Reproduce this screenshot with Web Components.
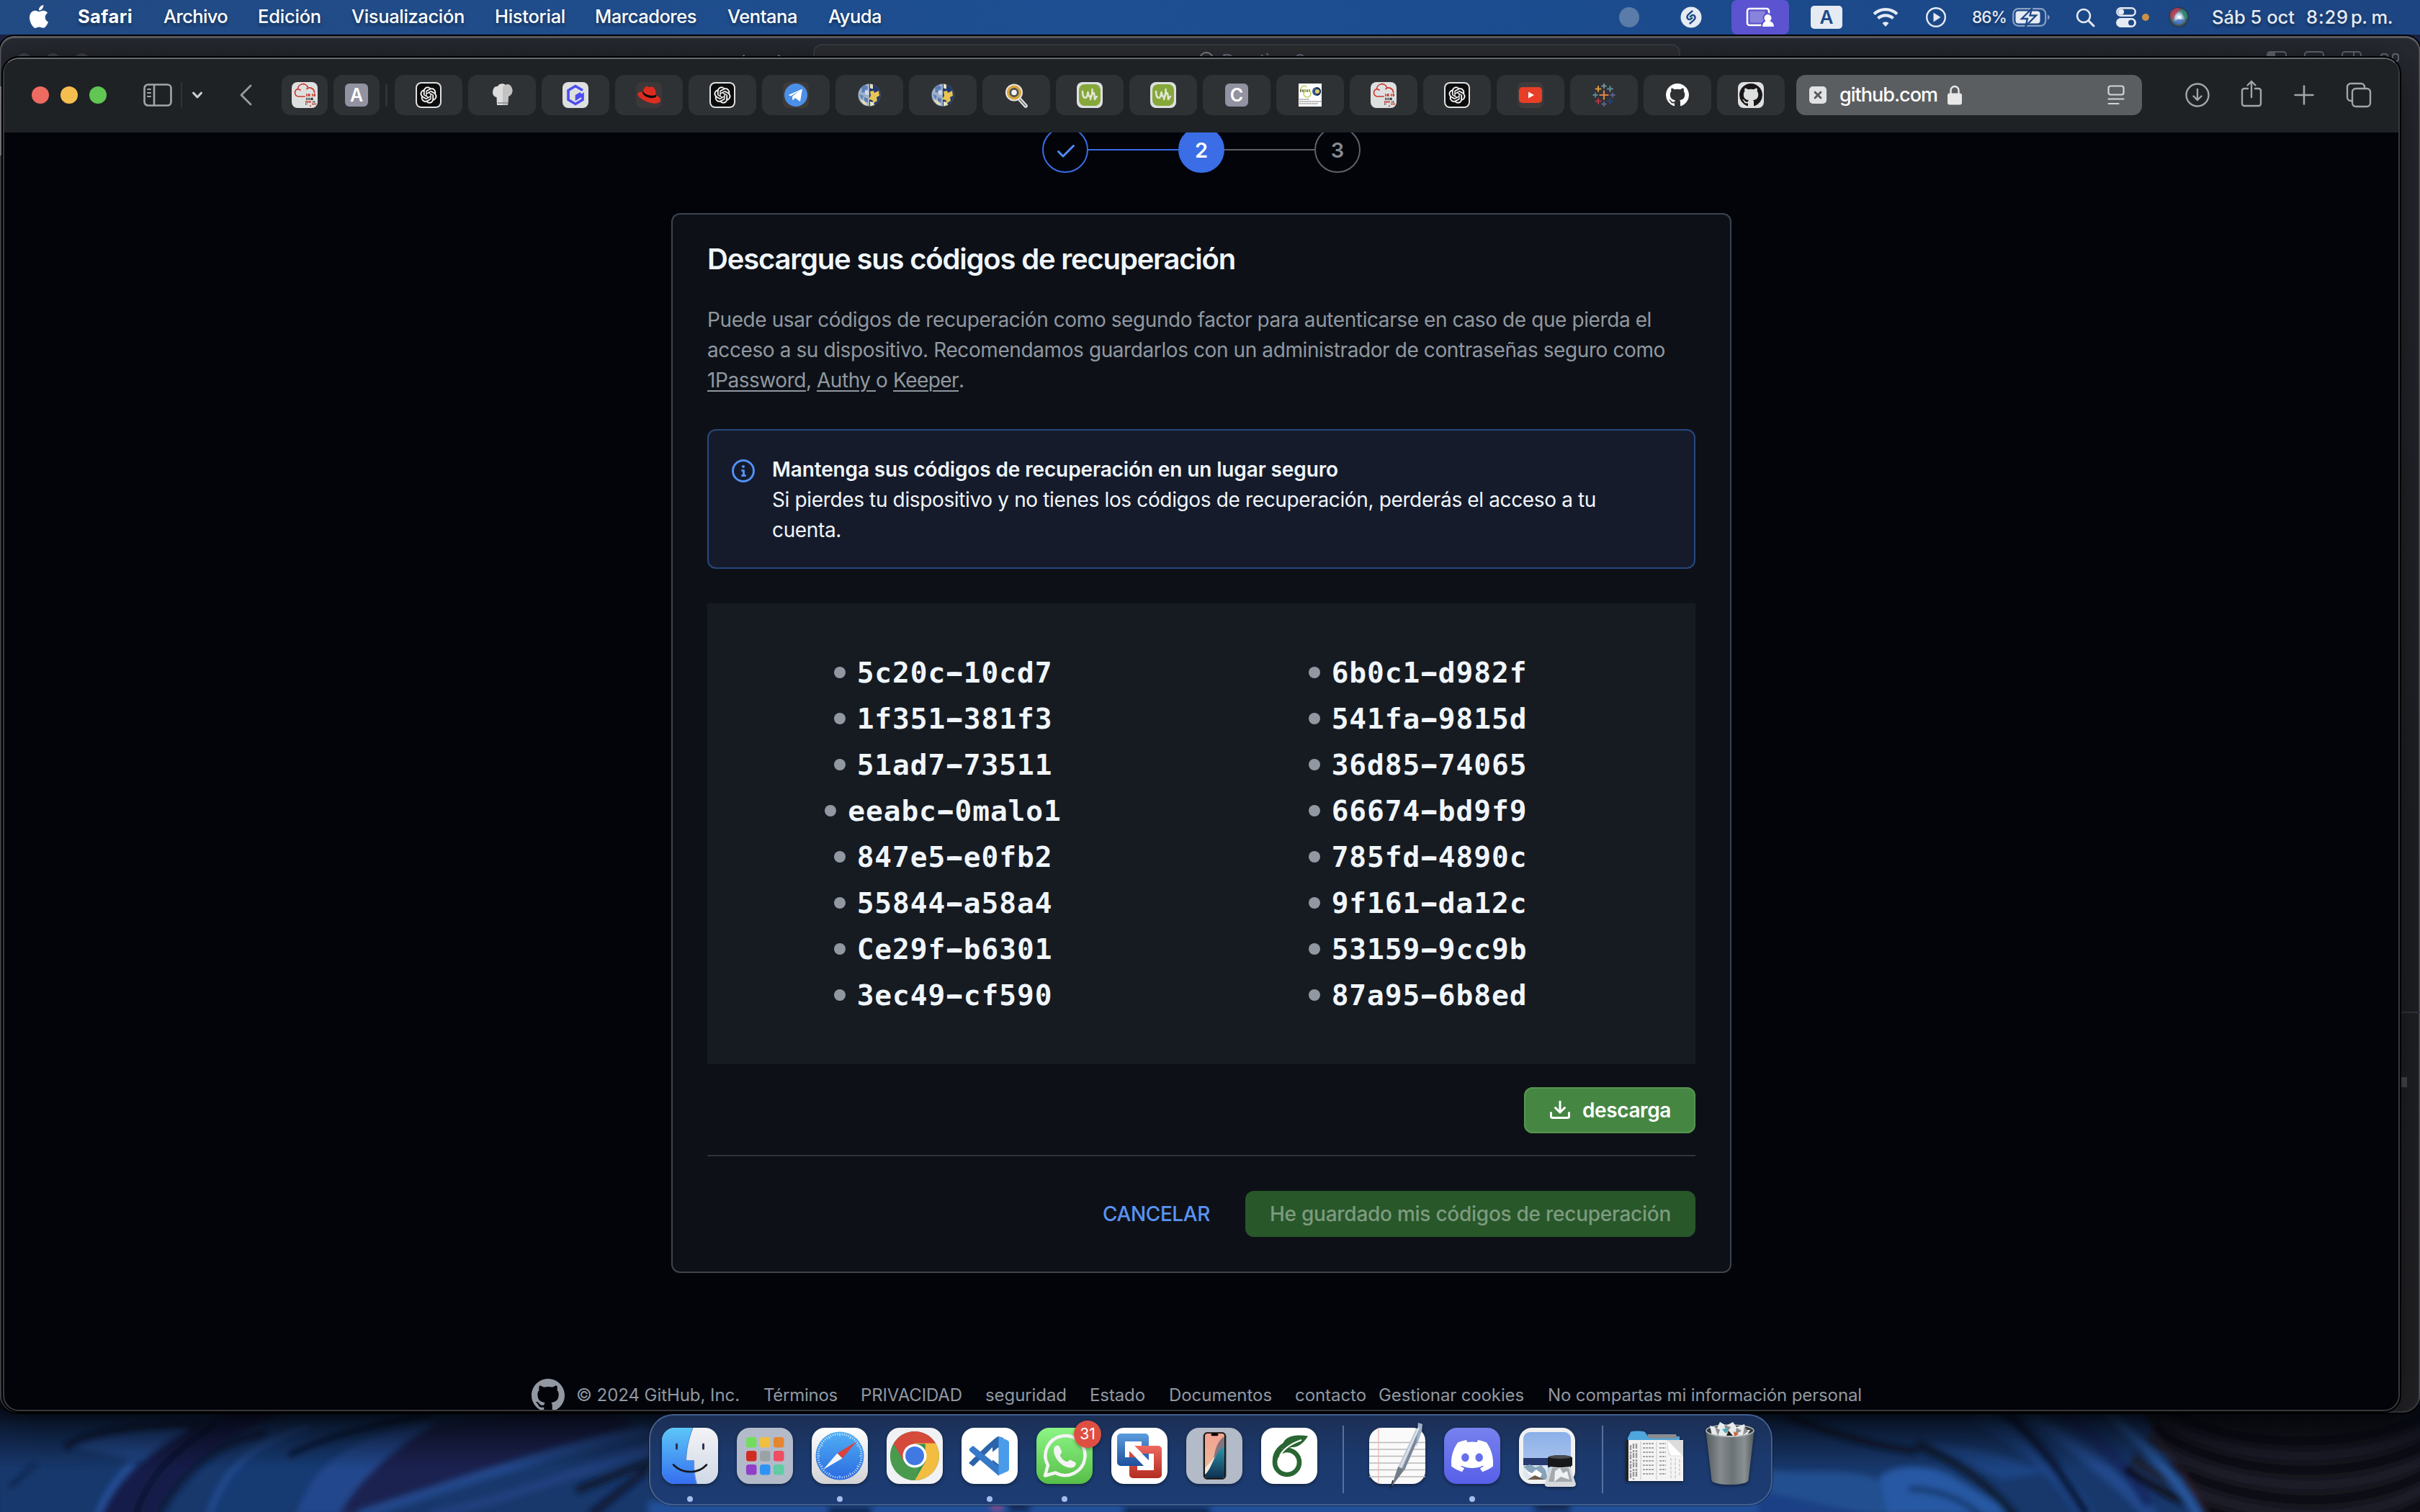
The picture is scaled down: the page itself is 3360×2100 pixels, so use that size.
<!DOCTYPE html>
<html lang="es">
<head>
<meta charset="utf-8">
<title>Códigos de recuperación</title>
<style>
html,body{margin:0;padding:0;background:#02040a}
body{width:3360px;height:2100px;overflow:hidden;font-family:Inter,"Liberation Sans",sans-serif}
</style>
</head>
<body>
<mac-desktop></mac-desktop>
<script>
const P = {
 github:'M8 0c4.42 0 8 3.58 8 8a8.013 8.013 0 0 1-5.45 7.59c-.4.08-.55-.17-.55-.38 0-.27.01-1.13.01-2.2 0-.75-.25-1.23-.54-1.48 1.78-.2 3.65-.88 3.65-3.95 0-.88-.31-1.59-.82-2.15.08-.2.36-1.02-.08-2.12 0 0-.67-.22-2.2.82-.64-.18-1.32-.27-2-.27-.68 0-1.36.09-2 .27-1.53-1.03-2.2-.82-2.2-.82-.44 1.1-.16 1.92-.08 2.12-.51.56-.82 1.28-.82 2.15 0 3.06 1.86 3.75 3.64 3.95-.23.2-.44.55-.51 1.07-.46.21-1.61.55-2.33-.66-.15-.24-.6-.83-1.23-.82-.67.01-.27.38.01.53.34.19.73.9.82 1.13.16.45.68 1.31 2.69.94 0 .67.01 1.3.01 1.49 0 .21-.15.45-.55.38A7.995 7.995 0 0 1 0 8c0-4.42 3.58-8 8-8Z',
 openai:'M22.2819 9.8211a5.9847 5.9847 0 0 0-.5157-4.9108 6.0462 6.0462 0 0 0-6.5098-2.9A6.0651 6.0651 0 0 0 4.9807 4.1818a5.9847 5.9847 0 0 0-3.9977 2.9 6.0462 6.0462 0 0 0 .7427 7.0966 5.98 5.98 0 0 0 .511 4.9107 6.051 6.051 0 0 0 6.5146 2.9001A5.9847 5.9847 0 0 0 13.2599 24a6.0557 6.0557 0 0 0 5.7718-4.2058 5.9894 5.9894 0 0 0 3.9977-2.9001 6.0557 6.0557 0 0 0-.7475-7.0729zm-9.022 12.6081a4.4755 4.4755 0 0 1-2.8764-1.0408l.1419-.0804 4.7783-2.7582a.7948.7948 0 0 0 .3927-.6813v-6.7369l2.02 1.1686a.071.071 0 0 1 .038.052v5.5826a4.504 4.504 0 0 1-4.4945 4.4944zm-9.6607-4.1254a4.4708 4.4708 0 0 1-.5346-3.0137l.142.0852 4.783 2.7582a.7712.7712 0 0 0 .7806 0l5.8428-3.3685v2.3324a.0804.0804 0 0 1-.0332.0615L9.74 19.9502a4.4992 4.4992 0 0 1-6.1408-1.6464zM2.3408 7.8956a4.485 4.485 0 0 1 2.3655-1.9728V11.6a.7664.7664 0 0 0 .3879.6765l5.8144 3.3543-2.0201 1.1685a.0757.0757 0 0 1-.071 0l-4.8303-2.7865A4.504 4.504 0 0 1 2.3408 7.872zm16.5963 3.8558L13.1038 8.364 15.1192 7.2a.0757.0757 0 0 1 .071 0l4.8303 2.7913a4.4944 4.4944 0 0 1-.6765 8.1042v-5.6772a.79.79 0 0 0-.407-.667zm2.0107-3.0231l-.142-.0852-4.7735-2.7818a.7759.7759 0 0 0-.7854 0L9.409 9.2297V6.8974a.0662.0662 0 0 1 .0284-.0615l4.8303-2.7866a4.4992 4.4992 0 0 1 6.6802 4.66zM8.3065 12.863l-2.02-1.1638a.0804.0804 0 0 1-.038-.0567V6.0742a4.4992 4.4992 0 0 1 7.3757-3.4537l-.142.0805L8.704 5.459a.7948.7948 0 0 0-.3927.6813zm1.0976-2.3654l2.602-1.4998 2.6069 1.4998v2.9994l-2.5974 1.4997-2.6067-1.4997Z',
 apple:'M12.152 6.896c-.948 0-2.415-1.078-3.96-1.04-2.04.027-3.91 1.183-4.961 3.014-2.117 3.675-.546 9.103 1.519 12.09 1.013 1.454 2.208 3.09 3.792 3.039 1.52-.065 2.09-.987 3.935-.987 1.831 0 2.35.987 3.96.948 1.637-.026 2.676-1.48 3.676-2.948 1.156-1.688 1.636-3.325 1.662-3.415-.039-.013-3.182-1.221-3.22-4.857-.026-3.04 2.48-4.494 2.597-4.559-1.429-2.09-3.623-2.324-4.39-2.376-2-.156-3.675 1.09-4.61 1.09zM15.53 3.83c.843-1.012 1.4-2.427 1.245-3.83-1.207.052-2.662.805-3.532 1.818-.78.896-1.454 2.338-1.273 3.714 1.338.104 2.715-.688 3.559-1.701',
 discord:'M20.317 4.3698a19.7913 19.7913 0 00-4.8851-1.5152.0741.0741 0 00-.0785.0371c-.211.3753-.4447.8648-.6083 1.2495-1.8447-.2762-3.68-.2762-5.4868 0-.1636-.3933-.4058-.8742-.6177-1.2495a.077.077 0 00-.0785-.037 19.7363 19.7363 0 00-4.8852 1.515.0699.0699 0 00-.0321.0277C.5334 9.0458-.319 13.5799.0992 18.0578a.0824.0824 0 00.0312.0561c2.0528 1.5076 4.0413 2.4228 5.9929 3.0294a.0777.0777 0 00.0842-.0276c.4616-.6304.8731-1.2952 1.226-1.9942a.076.076 0 00-.0416-.1057c-.6528-.2476-1.2743-.5495-1.8722-.8923a.077.077 0 01-.0076-.1277c.1258-.0943.2517-.1923.3718-.2914a.0743.0743 0 01.0776-.0105c3.9278 1.7933 8.18 1.7933 12.0614 0a.0739.0739 0 01.0785.0095c.1202.099.246.1981.3728.2924a.077.077 0 01-.0066.1276 12.2986 12.2986 0 01-1.873.8914.0766.0766 0 00-.0407.1067c.3604.698.7719 1.3628 1.225 1.9932a.076.076 0 00.0842.0286c1.961-.6067 3.9495-1.5219 6.0023-3.0294a.077.077 0 00.0313-.0552c.5004-5.177-.8382-9.6739-3.5485-13.6604a.061.061 0 00-.0312-.0286zM8.02 15.3312c-1.1825 0-2.1569-1.0857-2.1569-2.419 0-1.3332.9555-2.4189 2.157-2.4189 1.2108 0 2.1757 1.0952 2.1568 2.419 0 1.3332-.9555 2.4189-2.1569 2.4189zm7.9748 0c-1.1825 0-2.1569-1.0857-2.1569-2.419 0-1.3332.9554-2.4189 2.1569-2.4189 1.2108 0 2.1757 1.0952 2.1568 2.419 0 1.3332-.946 2.4189-2.1568 2.4189Z'
};
const S = (w,h,body,vb) => `<svg xmlns="http://www.w3.org/2000/svg" width="${w}" height="${h}" viewBox="${vb||`0 0 ${w} ${h}`}" fill="none">${body}</svg>`;
const plate = (c='#dee0e0') => `<rect width="36" height="36" rx="8" fill="${c}"/>`;
const line = (d,c='#a3a6a8',w=2.6) => `<path d="${d}" stroke="${c}" stroke-width="${w}" stroke-linecap="round" stroke-linejoin="round"/>`;
const tile = (fill,stroke='') => `<rect width="78" height="78" rx="18" fill="${fill}" ${stroke}/>`;
const grad = (id,a,b,dir='x1="0" y1="0" x2="0" y2="1"') => `<linearGradient id="${id}" ${dir}><stop offset="0" stop-color="${a}"/><stop offset="1" stop-color="${b}"/></linearGradient>`;
const ticks = () => { let s=''; for(let i=0;i<60;i++){ s+=`<path d="M39 7.5v${i%5?2.6:4.2}" transform="rotate(${i*6} 39 39)" stroke="#e8f3fd" stroke-width="1"/>`; } return s; };
const rows = (x,y,w,n,step,c) => { let s=''; for(let i=0;i<n;i++) s+=`<path d="M${x} ${y+i*step}h${w-(i*7%5)}" stroke="${c}" stroke-width="1.2" stroke-dasharray="${2+i%3} .8"/>`; return s; };
const plus = (x,y,r,c,w) => `<path d="M${x-r} ${y}h${2*r}M${x} ${y-r}v${2*r}" stroke="${c}" stroke-width="${w}"/>`;

const ICONS = {
 apple: S(26,32,`<path d="${P.apple}" fill="#fff"/>`,'2.2 0 19.6 24'),
 sidebar: S(40,32,`<rect x="1.5" y="1.5" width="37" height="29" rx="5" stroke="#a3a6a8" stroke-width="2.6"/><path d="M15 2v28" stroke="#a3a6a8" stroke-width="2.6"/>${line('M6 8h4M6 13h4M6 18h4','#a3a6a8',2)}`),
 chevdown: S(16,12,line('M2.5 3l5.5 6 5.5-6','#cfd0d1',3)),
 back: S(18,30,line('M16 2L3 15l13 13','#9a9c9e',2.8)),
 thm: S(36,36,plate()+`<path d="M18 20H9a5.300 5.300 0 0 1-1-10.200M8 10c1.500-.3 3 .2 4 1.200M8.500 9.800a7.200 7.200 0 0 1 14-2.300M21 9.500c4-3.500 10.500-.5 10.500 5" stroke="#c8372d" stroke-width="1.700" stroke-linecap="round"/><path d="M20 18h1.500m1 0h3m2.500 0h1.500m1 0h2.500" stroke="#c8372d" stroke-width="3.600"/><path d="M20 23.300h1.200m1 0h1.200m1 0h1.200m1 0h3" stroke="#333" stroke-width="3.200"/><path d="M19 27.500h8" stroke="#c8372d" stroke-width="2.400" stroke-dasharray="1.600 .6"/><path d="M29 27.500h4M19 30.500h2.500" stroke="#444" stroke-width="1.800" stroke-dasharray="1.400 .6"/><path d="M28 30.500h6M25 33.300h2" stroke="#c8372d" stroke-width="2" stroke-dasharray="1.600 .6"/>`),
 openai: S(36,36,plate()+`<rect x="2" y="2" width="32" height="32" rx="6" fill="#0c0c0c"/><path transform="translate(6.600 6.600) scale(.95)" d="${P.openai}" fill="#fff" stroke="#fff" stroke-width=".35"/>`),
 chef: S(36,36,`<path d="M11 32l-.5-11C5 20 4 14 6 10c1-4 4-4 6-4 1-4 8-5 11-2 3-2 7 0 8 3 3 5 1 11-4 13l-1 12z" fill="#dcdcdc"/><path d="M19 6v26h7l1-12c5-2 7-8 4-13-1-3-5-5-8-3z" fill="#c2c2c2"/><path d="M12 29h14" stroke="#888" stroke-width="1.500"/>`),
 hex: S(36,36,plate()+`<path d="M28 11.500L18 5.500 8 11.500v13l10 6 10-6v-7l-8.500 5.500v-4l6-3.500" stroke="#4c4cf5" stroke-width="3.600"/>`),
 redhat: S(36,36,plate('#3c3838')+`<path d="M9 14c2-5 3-8 6-8 2 0 2 1 4 1s3-1 5 0c3 2 4 8 4 11 7 4 8 9 3 11-8 3-24-4-28-10-2-4 2-6 6-5z" fill="#dc2c20"/><path d="M9 14.500c1 6 13 10 19 6l.5-3.500c-5 4-17 1-19-5z" fill="#0b0b0b"/>`),
 telegram: S(36,36,plate('#3e3b3b')+`<circle cx="18" cy="18" r="16" fill="#4a90e8"/><path d="M7.500 18L27 9.500 24 27l-7-5-3.500 3.500L13 20l9-7.500-11 7z" fill="#fff"/>`),
 ball: S(36,36,`<circle cx="18" cy="18" r="15.500" fill="#9fb0cb"/><path d="M18 2.500a15.500 15.500 0 0 1 0 31z" fill="#22386f"/><path d="M19 2.500l4 1v6l-4-1zM19 27l5 1 1 4-6 1.500z" fill="#e9e3b8"/><path d="M19 13l5-1 1 3 6-3 1 7-4 2 1 5-5 3-2-4-5-1 3-5z" fill="#e8c552"/><path d="M7 7l5-3 4 3-2 6-6 2zM4 17l6 2-2 5zM11 21l5 2v5l-5-1z" fill="#5c7fb5"/><path d="M12 11l5 1v6l-5-1z" fill="#cfd8e2"/><path d="M5 24l6 2 5 6-6-1z" fill="#e4dcae"/>`),
 mag: S(36,36,`<path d="M22 23l9 10" stroke="#eceae6" stroke-width="5.500" stroke-linecap="round"/><path d="M22 23l9 10" stroke="#777" stroke-width="1.800" stroke-linecap="round"/><circle cx="15" cy="14.500" r="12" fill="#e8e5e0"/><circle cx="15" cy="14.500" r="10" fill="#d9a53c"/><circle cx="15" cy="14.500" r="6.500" fill="#4c5158"/><circle cx="15" cy="14.500" r="3.800" fill="#f3f3f3"/>`),
 wn: S(36,36,plate()+`<rect x="3" y="3" width="30" height="30" rx="8" fill="#86a83a"/><path d="M8 13c0 6 2 9 4 9s3-4 3.500-8c.5 4 1.500 7 3.500 6s3-6 2.500-10M19 24c1-5 3-9 4.500-9s1 7 1.500 9c1-1 2-4 3-4" stroke="#e3e8d8" stroke-width="2.500" stroke-linecap="round" stroke-linejoin="round"/>`),
 pic: S(36,36,`<rect x="2" y="2" width="32" height="32" fill="#fff"/><path d="M4 12h15" stroke="#6b6f40" stroke-width="3.500" stroke-dasharray="2 1"/><circle cx="14" cy="16" r="5" stroke="#b9cf5a" stroke-width="1.500"/><path d="M5 10c1-5 6-6 8-3" stroke="#b9cf5a" stroke-width="1.500"/><circle cx="27" cy="13" r="6" fill="#35548c"/><path d="M27 7a6 6 0 0 1 0 12z" fill="#1c2d50"/><circle cx="28" cy="13" r="3" fill="#d8cd72"/>${rows(3,24,14,1,3,'#555')}${rows(3,27,31,1,3,'#555')}${rows(3,30,26,1,3,'#555')}`),
 youtube: S(36,36,plate('#3e3b3b')+`<rect x="2" y="7" width="32" height="22" rx="5" fill="#e93e27"/><path d="M15 13.500v9l8-4.500z" fill="#fff"/>`),
 tableau: S(36,36,plus(18,18,6.500,'#dd8149',2.200)+plus(18,5.500,3.500,'#7593a6',1.800)+plus(18,30.500,3.500,'#5b6591',1.800)+plus(6,18,3.500,'#5b8a96',1.800)+plus(30,18,3.500,'#5f6090',1.800)+plus(10,9.500,4.300,'#e0953d',2)+plus(26.500,9.500,4.300,'#64899b',2)+plus(10,26.500,4.300,'#b63345',2)+plus(26.500,26.500,4.300,'#27407f',2)),
 ghwhite: S(36,36,`<path transform="translate(2 2) scale(2)" d="${P.github}" fill="#fff"/>`),
 ghplate: S(36,36,plate()+`<path transform="translate(2 2) scale(2)" d="${P.github}" fill="#19171a"/>`),
 xtile: S(24,24,`<rect width="24" height="24" rx="5" fill="#e3e3e4"/>${line('M8 8l8 8M16 8l-8 8','#55585b',2.800)}`),
 lock: S(20,28,`<rect x="0" y="11.500" width="20" height="16" rx="3" fill="#e8e8e9"/><path d="M4.500 12V7.500a5.500 5.500 0 0 1 11 0V12" stroke="#e8e8e9" stroke-width="2.400"/>`),
 reader: S(24,28,`<rect x="1.500" y="1.500" width="21" height="12" rx="3" stroke="#d4d5d6" stroke-width="2.200"/>${line('M1.500 19.500h21M1.500 26h14','#d4d5d6',2.200)}`),
 download: S(34,34,`<circle cx="17" cy="17" r="15.500" stroke="#a3a6a8" stroke-width="2.400"/>${line('M17 9v15M11.500 18.500l5.500 5.500 5.500-5.500','#a3a6a8',2.400)}`),
 share: S(30,38,line('M10 12H5a3 3 0 0 0-3 3v18a3 3 0 0 0 3 3h20a3 3 0 0 0 3-3V15a3 3 0 0 0-3-3h-5M15 24V2M9.500 7.500L15 2l5.500 5.500','#a3a6a8',2.400)),
 newtab: S(28,28,line('M14 1.500v25M1.500 14h25','#a3a6a8',2.600)),
 tabs: S(36,36,`<rect x="9" y="9" width="25" height="25" rx="5" stroke="#a3a6a8" stroke-width="2.400"/>${line('M9 26H7a5 5 0 0 1-5-5V7a5 5 0 0 1 5-5h14a5 5 0 0 1 5 5v2','#a3a6a8',2.400)}`),
 shazam: S(30,30,`<circle cx="15" cy="15" r="14.500" fill="#e6ebf3"/><g stroke="#1f4a86" stroke-width="2.400" stroke-linecap="round"><path d="M16.500 6.500l-5.300 4.700c-3.800 3.500-.6 9.200 3.800 5.800l1.300-1.200"/><path d="M13.500 23.500l5.300-4.700c3.800-3.500.6-9.200-3.800-5.800l-1.300 1.200"/></g>`),
 share2: S(40,28,`<rect x="2" y="2" width="30" height="23" rx="3" stroke="#fff" stroke-width="2.600"/><rect x="5.500" y="5.500" width="21" height="16" fill="#8883dc"/><path d="M22 28c0-6 2-8 4-9a6 6 0 1 1 9 0c3 1 5 4 5 9z" fill="#fff" stroke="#5b53cf" stroke-width="2"/>`),
 wifi: S(36,28,`<path d="M18 27l-4.500-5a6.500 6.500 0 0 1 9 0z" fill="#e6ebf3"/><path d="M7.500 15.500a15.500 15.500 0 0 1 21 0M2 9.500a23.500 23.500 0 0 1 32 0" stroke="#e6ebf3" stroke-width="4.200"/>`),
 play: S(30,30,`<circle cx="15" cy="15" r="12.800" stroke="#e6ebf3" stroke-width="2.400"/><path d="M11.500 8.500v13l10-6.500z" fill="#e6ebf3"/>`),
 battery: S(52,26,`<rect x="1.200" y="1.200" width="45" height="23.600" rx="7" stroke="#8ba0c2" stroke-width="2.200"/><rect x="4.500" y="4.500" width="34" height="17" rx="4" fill="#e6ebf3"/><path d="M49 9.500c3.500 1.500 3.500 5.500 0 7z" fill="#8ba0c2"/><path d="M27 1L13 15h8l-2.500 10L33 10.500h-8.500z" fill="#e6ebf3" stroke="#1f4987" stroke-width="2.400"/>`),
 search: S(27,27,`<circle cx="11" cy="11" r="9" stroke="#e6ebf3" stroke-width="2.600"/>${line('M18 18l7 7','#e6ebf3',3)}`),
 control: S(28,28,`<rect x="1.300" y="1.300" width="25.400" height="10.400" rx="5.200" stroke="#e6ebf3" stroke-width="2.400"/><circle cx="7" cy="6.500" r="4" fill="#e6ebf3"/><rect y="15" width="28" height="13" rx="6.500" fill="#e6ebf3"/><circle cx="21" cy="21.500" r="4" fill="#1f4987"/>`),
 siri: S(28,28,`<defs><radialGradient id="s"><stop offset="0" stop-color="#fff"/><stop offset=".35" stop-color="#a9cbe0"/><stop offset=".7" stop-color="#476d80"/><stop offset="1" stop-color="#26313d"/></radialGradient></defs><circle cx="14" cy="14" r="14" fill="url(#s)"/><path d="M3 6c5-6 12-6 14-3-3 3-9 6-10 15-5-2-6-7-4-12z" fill="#c8384f" opacity=".75"/><path d="M17 2c8 2 10 8 9 14-4 0-7-5-9-14z" fill="#2f8b6c" opacity=".85"/><path d="M6 21c6 4 12 3 16-3l-8-2z" fill="#3a67c4" opacity=".7"/><circle cx="15" cy="14" r="2.600" fill="#f4fafc"/>`),
 check: S(32,32,`<path d="M13.780 4.220a.75.75 0 0 1 0 1.060l-7.250 7.250a.75.75 0 0 1-1.060 0L2.220 9.280a.751.751 0 0 1 .018-1.042.751.751 0 0 1 1.042-.018L6 10.940l6.720-6.720a.75.75 0 0 1 1.060 0Z" fill="#4f8df5"/>`,'0 0 16 16'),
 info: S(32,32,'<path d="M0 8a8 8 0 1 1 16 0A8 8 0 0 1 0 8Zm8-6.500a6.500 6.500 0 1 0 0 13 6.500 6.500 0 0 0 0-13ZM6.500 7.750A.75.75 0 0 1 7.250 7h1a.75.75 0 0 1 .75.75v2.750h.25a.75.75 0 0 1 0 1.500h-2a.75.75 0 0 1 0-1.500h.25v-2h-.25a.75.75 0 0 1-.75-.75ZM8 6a1 1 0 1 1 0-2 1 1 0 0 1 0 2Z" fill="#5390f4"/>','0 0 16 16'),
 dl: S(32,32,'<path d="M2.750 14A1.750 1.750 0 0 1 1 12.250v-2.500a.75.75 0 0 1 1.500 0v2.500c0 .138.112.25.25.25h10.500a.25.25 0 0 0 .25-.25v-2.500a.75.75 0 0 1 1.500 0v2.500A1.750 1.750 0 0 1 13.250 14Z" fill="#fff"/><path d="M7.250 7.689V2a.75.75 0 0 1 1.500 0v5.689l1.970-1.969a.749.749 0 1 1 1.060 1.060l-3.250 3.250a.749.749 0 0 1-1.060 0L4.220 6.780a.749.749 0 1 1 1.060-1.060l1.970 1.969Z" fill="#fff"/>','0 0 16 16'),
 mark: S(46,46,`<path d="${P.github}" fill="#9198a1"/>`,'0 0 16 16'),
 layout: S(184,28,`<g stroke="#666a75" stroke-width="2"><rect x="1" y="1" width="26" height="24" rx="4"/><rect x="53" y="1" width="26" height="24" rx="4"/><rect x="105" y="1" width="26" height="24" rx="4"/><path d="M121 1v24"/><rect x="159" y="4" width="9" height="10" rx="3"/><rect x="175" y="4" width="8" height="10" rx="3"/></g><path d="M2 2h10v23H2z" fill="#666a75"/>`),
 /* dock */
 finder: S(78,78,`<defs>${grad('a','#5cc6f8','#356ff0')}${grad('b','#f3f3f6','#cfd9e6')}<clipPath id="c"><rect width="78" height="78" rx="18"/></clipPath></defs><g clip-path="url(#c)"><rect width="78" height="78" fill="url(#b)"/><path d="M0 0h43c-6 16-9 30-9.500 46H44c0 12 1 22 4 32H0z" fill="url(#a)"/><path d="M43 0c-6 16-9 30-9.500 45.500H44.500c0 12 1 22 4 33" stroke="#3f74c9" stroke-width=".8"/></g><path d="M20.500 23v6M57.500 23v6" stroke="#26344e" stroke-width="3" stroke-linecap="round"/><path d="M16 51.500c13 13 34 13 46 0" stroke="#15181e" stroke-width="2.600" stroke-linecap="round"/>`),
 launchpad: S(78,78,tile('#b3bbca')+[['#74dc5d',13,13],['#f0bf40',32,13],['#e5862f',51,13],['#d02d22',13,32],['#9aa2a6',32,32],['#ee4d62',51,32],['#8f3fc9',13,51],['#2f93f3',32,51],['#61cba3',51,51]].map(a=>`<rect x="${a[1]}" y="${a[2]}" width="14.500" height="14.500" rx="3.500" fill="${a[0]}"/>`).join('')),
 safari: S(78,78,`<defs>${grad('a','#51b0f5','#2a6ae0')}${grad('b','#ffffff','#d3d3d5')}</defs>${tile('url(#b)')}<circle cx="39" cy="39" r="33.500" fill="url(#a)"/>${ticks()}<path d="M62.500 19L42.500 42.500l-7-7z" fill="#d9433b"/><path d="M16 58l19.500-22.500 7 7z" fill="#f4f6f8"/>`),
 chrome: S(78,78,tile('#f1f2f5')+`<circle cx="39" cy="39" r="34" fill="#2f9150"/><path d="M9.600 22A34 34 0 0 1 68.400 22H39L24.300 47.500z" fill="#d64a3c"/><path d="M68.400 22A34 34 0 0 1 39 73l14.700-25.500L53.700 22z" fill="#f3bd42"/><path d="M39 22h29.400" stroke="#f3bd42"/><path d="M39 73A34 34 0 0 1 9.600 22l14.700 25.500A17 17 0 0 0 46 54.500z" fill="#4a9a4e"/><circle cx="39" cy="39" r="16.500" fill="#fff"/><circle cx="39" cy="39" r="13" fill="#4079e4"/>`),
 vscode: S(78,78,tile('#fff')+`<path d="M10 49c1-1 35-35 41-37l7 2v48l-7-2-8-9V27L17 53c-1 1-2 0-3-1z" fill="#2b64a8"/><path d="M11 29l5-4 36 29v13L11 32z" fill="#3579c8"/><path d="M51.500 12L64 17.500c1.500 1 2 2 2 3V57c0 2-1 3-2 3.500L51.500 66z" fill="#4a9ceb"/><path d="M51.500 27v24L36 39z" fill="#fff"/>`),
 whatsapp: S(78,78,`<defs>${grad('a','#8cf585','#57bf48')}</defs>${tile('url(#a)')}<path d="M12 66.500l4-14.500a27.500 27.500 0 1 1 10.500 10.500z" stroke="#f4f4f4" stroke-width="4.500" stroke-linejoin="round"/><path d="M25 27c2-3 6-3.500 7-1l3 7c1 2-3 4-2 6 2 4 5 7 9 8 2 1 3-3 6-2l6 3c2 2 0 6-3 7-12 4-31-14-26-28z" fill="#f4f4f4"/>`),
 vmware: S(78,78,`<defs>${grad('a','#5b9ddd','#1e4f9d')}${grad('b','#ee6860','#b32c22')}</defs>${tile('#fff')}<path fill-rule="evenodd" d="M13 8h34a5 5 0 0 1 5 5v35a5 5 0 0 1-5 5H13a5 5 0 0 1-5-5V13a5 5 0 0 1 5-5zm6 11v22h23V19z" fill="url(#a)"/><path d="M32 25h33a5 5 0 0 1 5 5v35a5 5 0 0 1-5 5H30a5 5 0 0 1-5-5V53h11v6h23V36H43z" fill="url(#b)"/><path d="M25 32l10 9H25z" fill="#d8463e"/><path d="M24.500 31.500V25H32l20 20V36h7v23H36v-6h9z" fill="#fff"/><path d="M43 36h9v9z" fill="#2f68b4"/>`),
 iphone: S(78,78,`<defs>${grad('a','#2f98ae','#0e2f4e')}${grad('b','#f3a291','#e9c09a')}</defs>${tile('#b3bbc8')}<rect x="24" y="6.500" width="31" height="65" rx="5" fill="#0d1014" stroke="#463a30"/><rect x="26" y="8" width="27" height="62" rx="3.500" fill="url(#b)"/><path d="M53 12v18L38 46c1-14 5-28 15-34z" fill="#84737e"/><path d="M26 56l27-30v8L26 66z" fill="#f4e6df"/><path d="M53 25v42a3 3 0 0 1-3 3H29a3 3 0 0 1-3-3v-2c10-8 12-30 27-40z" fill="url(#a)"/><rect x="34.500" y="8" width="10" height="3.200" rx="1.600" fill="#000"/>`),
 oleaf: S(78,78,tile('#fff')+`<circle cx="36" cy="48" r="17" stroke="#2a6633" stroke-width="6.600"/><path d="M18.500 46c0-10 6-18 14-23" stroke="#2a6633" stroke-width="5.500"/><path d="M30 27c-1-14 15-19 35-15.500-6 10-14 16-22 15.500-5 0-9 4-12 9z" fill="#2a6633"/><path d="M26 39c5-10 16-17 30-22" stroke="#fff" stroke-width="2.200"/>`),
 textedit: S(78,78,tile('#fafafa')+`<path d="M0 20.500h78M0 30h78M0 39.500h78M0 49h78M0 58.500h78M0 68h78" stroke="#b9b9b9" stroke-width="1.400"/><path d="M13 0v78" stroke="#efb2b2" stroke-width="1.200"/><path d="M65 2l8 2-24 55-9-4z" fill="#bac4d2"/><path d="M69 3l4 1-24 55-3.500-1.500z" fill="#7a8798"/><path d="M68-7l6 2-1 10-8 22 2-24z" fill="#9fb0c5"/><path d="M69 0L34 75" stroke="#dfe6ee" stroke-width="2"/><path d="M40 54l9 4-18 24z" fill="#737b86"/><path d="M33 73l-3 10" stroke="#222" stroke-width="1.600"/>`),
 discord: S(78,78,`<defs>${grad('a','#7781ee','#5760e8')}</defs>${tile('url(#a)')}<path transform="translate(10 10) scale(2.420)" d="${P.discord}" fill="#fff"/>`),
 preview: S(78,78,`<defs>${grad('a','#8bb0e8','#b9cdf0')}</defs><rect width="78" height="78" rx="18" fill="#f1f1f2"/><rect x="6" y="6" width="66" height="66" rx="9" fill="url(#a)"/><path d="M6 42h66v13H6z" fill="#273a70"/><path d="M6 52h34v20H15a9 9 0 0 1-9-9z" fill="#dfe7ee"/><path d="M6 54l9-3 8 4 8-3 6 7 3 13H22l-5-8z" fill="#87a3bb"/><path d="M10 60l8 3 6-5 8 6-3 6-12-3z" fill="#fff"/><path d="M12 72l10-6 14 6z" fill="#705c4c"/><path d="M43 54h28l8 24c0 4-4 4-6 4H41c-3 0-6-1-5-5z" fill="#d6d9dc"/><path d="M46 56h23l5 19H41z" fill="#a3a9ae"/><path d="M50 60l7-4 4 7 6-3 3 12-12-4-9 7z" fill="#eef0f1"/><path d="M40 42c0-5 34-5 34 0v10c0 4-34 4-34 0z" fill="#18191b"/><ellipse cx="57" cy="40.500" rx="15" ry="2.600" fill="#4b4c4e"/>`),
 docs: S(82,72,`<path d="M4 10l4-8c1-2 18-2 20 0l4 6h44v16H4z" fill="#4fa6dd"/><path d="M31 5h40l2 6H34z" fill="#888d92"/><rect x="1" y="13" width="80" height="57" fill="#f4f4f4"/><path d="M1 13h4v57H1z" fill="#1f2327"/><path d="M8 20v46M12 18v50M16 18v48" stroke="#999" stroke-width="2.400" stroke-dasharray="7 2 3 1"/><path d="M22 15v53M44 15v53" stroke="#c8c8c8"/>${[18,24,30,36,42,48,54,60].map(y=>`<path d="M25 ${y}h15M48 ${y}h9" stroke="#a5a5a5" stroke-width="2.200" stroke-dasharray="3 1"/>`).join('')}<path d="M64 38v28M70 38v28M76 40v24" stroke="#cfcfcf" stroke-width="1.600" stroke-dasharray="4 2"/><path d="M59 13h22v22H63c-3 0-4-14-4-22z" fill="#dcdcdc"/><path d="M59 13l22 22H64c-4-4-5-14-5-22z" fill="#fff" stroke="#ccc" stroke-width=".6"/>`),
 trash: S(70,90,`<defs><linearGradient id="m" x1="0" x2="1"><stop offset="0" stop-color="#555c5f"/><stop offset=".3" stop-color="#858b8e"/><stop offset=".55" stop-color="#6b7275"/><stop offset=".8" stop-color="#8b9193"/><stop offset="1" stop-color="#51585b"/></linearGradient></defs><ellipse cx="35" cy="13" rx="33" ry="8" fill="#33383b" stroke="#aeb4b7" stroke-width="1.600"/><path d="M10 20L7 6l10 3 4-8 9 5 9-5 5 7 11-4 2 8 6 0-6 10z" fill="#e9eaeb"/><path d="M14 8l7 4-3 8zM27 5l3 12 6-9zM44 9l-2 10 9-6zM55 7l-2 12 7-5z" fill="#8d8f91"/><path d="M24 11l7-1-2 7z" fill="#35b2c9"/><path d="M40 14l7 4-6 3z" fill="#d0603d"/><path d="M33 13l6 7h-9z" fill="#222"/><path d="M1.500 14c8 10 59 10 67 0l-8 68c-2 8-49 8-51 0z" fill="url(#m)"/><path d="M2 14c8 10 58 10 66 0" stroke="#a8aeb0" stroke-width="1.600"/>`)
};

/* Base class: every element renders its own styles and markup into an open shadow root. */
class El extends HTMLElement {
  constructor(){ super(); this.attachShadow({mode:'open'}); this.shadowRoot.innerHTML = `<style>*{box-sizing:border-box}${this.css()}</style>${this.html()}`; }
  css(){ return ':host{display:block}'; }
  html(){ return '<slot></slot>'; }
}
const a = (el,n,d='') => el.getAttribute(n) ?? d;

class UiIcon extends El {
  css(){ return ':host{display:block;flex:none}svg{display:block;overflow:visible}'; }
  html(){ return ICONS[a(this,'name')] || ''; }
}

/* Text run set to a given advance width by tracking. */
class FitText extends El {
  css(){ return `:host{display:inline-block;flex:none;white-space:pre}:host([link]){text-decoration:underline 2px;text-underline-offset:4px}`; }
  connectedCallback(){
    const w = +a(this,'w'), n = [...this.textContent].length;
    if(!w || !n) return;
    this.style.letterSpacing = '0px';
    this.style.alignSelf = 'flex-start';
    const nat = this.getBoundingClientRect().width;
    this.style.letterSpacing = ((w - nat)/n).toFixed(3) + 'px';
    this.style.width = w + 'px';
    this.style.alignSelf = '';
  }
}

class MenuBar extends El {
  css(){ return `:host{display:flex;height:48px;width:3360px;background:linear-gradient(90deg,#224a83,#1d4f92 45%,#1b4d90 60%,#1d4582);color:#fff;font-size:25.5px;line-height:46px;font-weight:500;text-shadow:0 3px 4px #0006;position:relative}
   .l,.r{display:flex;height:46px;align-items:center}.l{margin-left:41px}.l ui-icon{margin-right:41px;margin-top:-1px}.r{margin-left:auto;color:#e6ebf3;margin-right:38px;height:48px}
   fit-text{height:46px}.b{font-weight:700}.g{width:28px;height:28px;border-radius:50%;background:#5b7ba8}
   .p{width:80px;height:48px;border-radius:8px;background:#5b53cf;display:flex;align-items:center;justify-content:center}
   .a{width:44px;height:32px;border-radius:5px;background:#e6ebf3;color:#1c4a88;font-weight:600;font-size:26px;line-height:32px;text-align:center;text-shadow:none}
   .o{width:10px;height:10px;border-radius:50%;background:#cc9044}`; }
  html(){
    const m=[['Archivo',227,89],['Edición',358,88],['Visualización',488,157],['Historial',687,98],['Marcadores',826,141],['Ventana',1010,97],['Ayuda',1150,74]];
    let x=184, s='';
    for(const [t,l,w] of m){ s+=`<fit-text w="${w}" style="margin-left:${l-x}px">${t}</fit-text>`; x=l+w; }
    return `<div class="l"><ui-icon name="apple"></ui-icon><fit-text class="b" w="76">Safari</fit-text>${s}</div>
    <div class="r"><div class="g"></div><ui-icon name="shazam" style="margin-left:57px"></ui-icon><div class="p" style="margin-left:41px"><ui-icon name="share2"></ui-icon></div>
    <div class="a" style="margin-left:30px">A</div><ui-icon name="wifi" style="margin-left:42px"></ui-icon><ui-icon name="play" style="margin-left:37px"></ui-icon>
    <fit-text w="48" style="margin-left:35px;font-size:22.500px">86%</fit-text><ui-icon name="battery" style="margin-left:8px"></ui-icon><ui-icon name="search" style="margin-left:36px"></ui-icon>
    <ui-icon name="control" style="margin-left:29px"></ui-icon><div class="o" style="margin-left:8px"></div><ui-icon name="siri" style="margin-left:27px"></ui-icon>
    <fit-text w="115" style="margin-left:32px">Sáb 5 oct</fit-text><fit-text w="59" style="margin-left:16px">8:29</fit-text><fit-text w="58" style="margin-left:3px">p. m.</fit-text></div>`;
  }
}

class MacWallpaper extends El {
  css(){ return ':host{display:block}svg{display:block}'; }
  html(){
    const st=(d,c,w,o=1)=>`<path d="${d}" stroke="${c}" stroke-width="${w}" opacity="${o}" fill="none"/>`;
    const arcs=[0,1,2,3,4,5,6].map(i=>st(`M${3010-i*10} ${1955+i*14}C3080 ${2010+i*20} 3260 ${2020+i*22} 3370 ${1965+i*20}`,i%2?'#1c1e2a':'#0c0d14',12,.9)).join('');
    return S(3360,150,`<defs><filter id="f" x="-5%" y="-20%" width="110%" height="140%"><feGaussianBlur stdDeviation="4"/></filter><linearGradient id="sh" x1="0" y1="0" x2="0" y2="1"><stop offset="0" stop-color="#04070f" stop-opacity=".95"/><stop offset=".35" stop-color="#04070f" stop-opacity=".5"/><stop offset="1" stop-color="#04070f" stop-opacity="0"/></linearGradient></defs>
    <rect y="1950" width="3360" height="150" fill="#18386c"/><g filter="url(#f)">
    <path d="M95 2008C140 1990 220 1980 290 1984L200 2030z" fill="#22498c"/><path d="M0 2050L200 2030 130 2110H0z" fill="#17376c"/>
    ${st('M90 2010C130 1985 220 1978 310 1978','#0a1732',9)}${st('M12 2066L50 2034','#0e2248',6)}
    <path d="M330 1955C240 1990 190 2020 130 2110H220C250 2040 300 2000 400 1960z" fill="#191f4a"/>${st('M185 2032C165 2050 145 2080 136 2104','#27509a',9)}
    ${st('M300 1978C250 2010 210 2040 188 2104','#0a1233',9)}${st('M370 1990C300 2000 250 2050 220 2104','#0e1b3e',10)}
    <path d="M520 1955C400 1990 330 2010 290 2104H400C420 2050 520 2000 620 1960z" fill="#193a73"/>${st('M430 1980C350 2005 310 2040 290 2104','#244b90',8)}
    ${st('M600 1962C520 1980 450 1995 400 2022','#0a1630',9)}
    <path d="M560 1985C500 2000 440 2020 410 2104H480C500 2050 550 2010 610 1970z" fill="#22468c"/>
    <path d="M610 1975L830 1955 900 1990C800 2010 650 2070 470 2104 500 2050 560 2000 610 1975z" fill="#1d244f"/>
    ${st('M500 2104C640 2060 780 2010 900 1985','#24468a',14)}${st('M600 2104C720 2080 830 2030 930 2005','#22407f',12)}${st('M800 2070C850 2050 900 2030 930 2020','#0e1a35',12)}${st('M820 2104L900 2040','#0e1733',10)}
    <path d="M900 2085h1600v20H900z" fill="#24509a"/>${st('M1150 2098h60M1400 2094h30M1560 2098h120M2130 2094h50','#0e1c3c',10)}${st('M1378 2093h12','#b3476a',5)}
    <path d="M2440 2040C2500 2050 2560 2035 2610 2055L2700 2104H2440z" fill="#21508f"/><path d="M2440 2070L2600 2104H2440z" fill="#1a3f85"/>
    <path d="M2610 2050C2640 2030 2680 2035 2710 2050L2800 2104H2620z" fill="#2558a3"/>${st('M2650 2068C2690 2068 2720 2080 2750 2104','#123063',7)}
    ${st('M2480 1965C2560 2000 2620 2010 2660 2016','#0c1726',8)}${st('M2660 2006C2720 2030 2760 2060 2800 2110','#101a33',12)}
    <path d="M2680 2004C2760 2010 2800 2030 2840 2045L2780 2055C2740 2035 2710 2020 2680 2004z" fill="#1d4584"/>
    ${st('M2740 1960C2810 2000 2860 2040 2900 2110','#1c4486',24)}${st('M2780 1960C2840 2010 2870 2060 2898 2104','#0a1431',12)}${st('M2815 1960C2880 2010 2950 2060 2990 2110','#20488c',18)}${st('M2860 1960C2920 2000 2960 2050 2985 2090','#172a63',16)}
    <path d="M2970 1950H3370V2110H3060C3040 2060 3000 2010 2970 1950z" fill="#14151e"/>${arcs}
    ${st('M2920 1955C2980 2010 3030 2060 3055 2110','#25569b',13)}${st('M2985 1985C3020 2030 3050 2070 3065 2104','#3a2730',4,.7)}
    </g><rect y="1950" width="3360" height="90" fill="url(#sh)"/>`,'0 1950 3360 150');
  }
}

/* Editor window that peeks out behind the browser. */
class BackWindow extends El {
  css(){ return `:host{display:block;height:1912px;width:3360px;border-radius:20px 20px 24px 24px;background:linear-gradient(180deg,#272a31,#1f2126 60%,#242428);box-shadow:0 0 0 2px #000,inset 0 2px 0 1px #5c5e63,inset 0 0 0 2px #3c3e44;overflow:hidden}
   .top{display:flex;height:40px;align-items:flex-start;padding:11px 29px 0 23px}.d{width:21px;height:21px;border-radius:50%;background:#43454c;margin-right:19px;margin-top:13px;flex:none}
   .nav{margin:14px 0 0 884px;flex:none;width:62px}.nav svg{display:block}
   .c{width:1204px;height:60px;border:2px solid #3b3e47;border-radius:12px;background:#2f3035;margin-left:40px;display:flex;color:#6b6f80;font-size:26px;line-height:44px;flex:none}
   .m{width:20px;height:20px;border:2px solid #8a8c92;border-radius:50%;margin:9px 11px 0 534px;flex:none}
   ui-icon{margin-left:auto;margin-top:10px}
   .side{margin-left:auto;width:28px;height:1px;display:flex;flex-direction:column;padding-top:1315px}.ln{height:2px;background:#353844;flex:none}.th{width:10px;height:14px;background:#4b4c50;margin-top:89px;flex:none}`; }
  html(){ return `<div class="top"><i class="d"></i><i class="d"></i><i class="d"></i><div class="nav">${S(62,20,line('M6 2L-4 12M54 2L64 12','#85878d',2))}</div><div class="c"><i class="m"></i><fit-text w="116">Practica 2</fit-text></div><ui-icon name="layout"></ui-icon></div><div class="side"><i class="ln"></i><i class="th"></i></div>`; }
}

class BrowserTab extends El {
  css(){ return `:host{display:flex;flex:none;width:94px;height:56px;border-radius:13px;background:#2f3235;align-items:center;justify-content:center}:host([pinned]){width:64px}
   .t{width:32px;height:32px;border-radius:6px;background:#9292a0;color:#fff;font-weight:600;font-size:25px;line-height:32px;text-align:center}`; }
  html(){ return this.hasAttribute('letter') ? `<div class="t">${a(this,'letter')}</div>` : `<ui-icon name="${a(this,'icon')}"></ui-icon>`; }
}

class BrowserToolbar extends El {
  css(){ return `:host{display:flex;flex:none;height:102px;background:#1f2225;align-items:center;padding:0 37px 2px 38px}
   i{display:block;width:24px;height:24px;border-radius:50%;margin-right:16px}
   .tabs{display:flex;gap:8px}.sep{width:3px;height:32px;background:#303336;border-radius:2px;flex:none}
   .url{flex:none;display:flex;align-items:center;width:480px;height:56px;border-radius:13px;background:#5b5e61;color:#fff;margin-left:16px;padding:0 24px 0 18px;font-size:27px;font-weight:500;line-height:56px}
   .end{display:flex;align-items:center;margin-left:auto}`; }
  html(){
    const t=['openai','chef','hex','redhat','openai','telegram','ball','ball','mag','wn','wn','=C','pic','thm','openai','youtube','tableau','ghwhite','ghplate'];
    return `<i style="background:#ed6b60"></i><i style="background:#f5bf4f"></i><i style="background:#61c654"></i>
    <ui-icon name="sidebar" style="margin-left:35px"></ui-icon><span class="sep" style="width:2px;height:36px;margin-left:12px"></span><ui-icon name="chevdown" style="margin-left:13px"></ui-icon><ui-icon name="back" style="margin-left:50px"></ui-icon>
    <div class="tabs" style="margin-left:41px"><browser-tab pinned icon="thm"></browser-tab><browser-tab pinned letter="A"></browser-tab></div><span class="sep" style="margin:0 10px 0 8px"></span>
    <div class="tabs">${t.map(n=>n[0]=='='?`<browser-tab letter="${n[1]}"></browser-tab>`:`<browser-tab icon="${n}"></browser-tab>`).join('')}</div>
    <div class="url"><ui-icon name="xtile"></ui-icon><fit-text w="136" style="margin-left:18px">github.com</fit-text><ui-icon name="lock" style="margin-left:14px"></ui-icon><ui-icon name="reader" style="margin-left:auto"></ui-icon></div>
    <div class="end"><ui-icon name="download"></ui-icon><ui-icon name="share" style="margin-left:43px;margin-top:-4px"></ui-icon><ui-icon name="newtab" style="margin-left:44px"></ui-icon><ui-icon name="tabs" style="margin-left:44px"></ui-icon></div>`;
  }
}

class StepIndicator extends El {
  css(){ return `:host{display:flex;align-items:center;justify-content:center;height:64px;margin-top:-8px}
   div{width:64px;height:64px;border-radius:50%;border:2px solid;display:flex;align-items:center;justify-content:center;font-size:29px;font-weight:600}
   .d{border-color:#3a6de6}.n{border-color:#3a6de6;background:#3a6de6;color:#fff}.w{border-color:#5d6269;color:#848a93}b{width:125px;height:2px}`; }
  html(){ return `<div class="d"><ui-icon name="check" style="margin:2px 0 0 2px"></ui-icon></div><b style="background:#3a6de6"></b><div class="n">2</div><b style="background:#5d6269"></b><div class="w">3</div>`; }
}

class InfoAlert extends El {
  css(){ return `:host{display:flex;border:2px solid #28487f;border-radius:12px;background:#151b2b;padding:33px 32px 0;color:#f0f6fc;line-height:42px;height:194px}ui-icon{margin:7px 24px 0 0}.t{display:flex;flex-direction:column;align-items:flex-start}`; }
  html(){ return `<ui-icon name="info"></ui-icon><div class="t"><slot></slot></div>`; }
}

/* The hyphen is widened by its shadows, so its box keeps one cell of the grid. */
class CodeList extends El {
  css(){ return `:host{display:grid;grid-template-columns:659px 659px;grid-auto-flow:column;grid-template-rows:repeat(8,64px);background:#161b22;height:640px;padding:64px 0 0 14px;margin-top:48px;font:700 39.500px/64px "DejaVu Sans Mono",monospace;color:#f0f6fc}
   div{display:flex;justify-content:center;align-items:center}i{width:16px;height:16px;border-radius:50%;background:#9198a1;margin:-1px 16px 0 -32px}
   span{text-shadow:-4px 0 currentColor,4px 0 currentColor}`; }
  html(){ return a(this,'codes').split(' ').map(c=>`<div><i></i><fit-text w="${c.length*24.7}">${c.replace('-','<span>-</span>')}</fit-text></div>`).join(''); }
}

class GhButton extends El {
  css(){ return `:host{display:flex;align-items:center;height:64px;border-radius:12px;padding:0 34px;font-size:28px;line-height:62px;font-weight:500}
   :host([kind=primary]){background:#458643;box-shadow:inset 0 0 0 2px #57954f;color:#fff;font-weight:600;padding:0 34px 0 34px}:host([kind=disabled]){background:#28572a;color:#7d9b7e;font-weight:500}:host([kind=link]){color:#5a93f2;padding:0 49px}
   ui-icon{margin-right:15px}`; }
  html(){ return `${this.hasAttribute('icon')?`<ui-icon name="${a(this,'icon')}"></ui-icon>`:''}<slot></slot>`; }
}

class RecoveryCard extends El {
  css(){ return `:host{display:block;width:1472px;height:1472px;margin:56px auto 0;border:2px solid #3d444d;border-radius:12px;background:#0d1117;padding:32px 48px 0}
   h1{margin:0;font-size:40px;line-height:60px;font-weight:600;color:#f0f6fc;height:60px}
   .p{display:flex;flex-direction:column;margin:33px 0 47px;font-size:28px;line-height:42px;color:#9198a1}.p>div{display:flex;height:42px}
   info-alert{font-size:28px}b{font-weight:600}
   .r{display:flex;justify-content:flex-end}hr{border:0;height:2px;background:#2f3439;margin:30px 0 48px}`; }
  html(){ return `<h1><fit-text w="733">Descargue sus códigos de recuperación</fit-text></h1>
   <div class="p"><div><fit-text w="1311">Puede usar códigos de recuperación como segundo factor para autenticarse en caso de que pierda el</fit-text></div>
   <div><fit-text w="1330">acceso a su dispositivo. Recomendamos guardarlos con un administrador de contraseñas seguro como</fit-text></div>
   <div><fit-text link w="137">1Password</fit-text><fit-text w="15">, </fit-text><fit-text link w="82">Authy </fit-text><fit-text w="24">o </fit-text><fit-text link w="91">Keeper</fit-text><span>.</span></div></div>
   <info-alert><b><fit-text w="786">Mantenga sus códigos de recuperación en un lugar seguro</fit-text></b><fit-text w="1144">Si pierdes tu dispositivo y no tienes los códigos de recuperación, perderás el acceso a tu</fit-text><fit-text w="96">cuenta.</fit-text></info-alert>
   <code-list codes="5c20c-10cd7 1f351-381f3 51ad7-73511 eeabc-0malo1 847e5-e0fb2 55844-a58a4 Ce29f-b6301 3ec49-cf590 6b0c1-d982f 541fa-9815d 36d85-74065 66674-bd9f9 785fd-4890c 9f161-da12c 53159-9cc9b 87a95-6b8ed"></code-list>
   <div class="r" style="margin-top:32px"><gh-button kind="primary" icon="dl"><fit-text w="123">descarga</fit-text></gh-button></div><hr>
   <div class="r"><gh-button kind="link"><fit-text w="149">CANCELAR</fit-text></gh-button><gh-button kind="disabled"><fit-text w="557">He guardado mis códigos de recuperación</fit-text></gh-button></div>`; }
}

class GhFooter extends El {
  css(){ return `:host{display:flex;align-items:center;margin:146px 0 0 732px;height:48px;font-size:24px;line-height:48px;color:#9198a1}`; }
  html(){
    const m=[['© 2024 GitHub, Inc.',800,227],['Términos',1060,103],['PRIVACIDAD',1195,141],['seguridad',1368,113],['Estado',1513,77],['Documentos',1623,143],['contacto',1798,99],['Gestionar cookies',1914,202],['No compartas mi información personal',2149,436]];
    let x=784,s='';
    for(const [t,l,w] of m){ s+=`<fit-text w="${w}" style="margin-left:${l-x}px">${t}</fit-text>`; x=l+w; }
    return `<ui-icon name="mark"></ui-icon>${s}`;
  }
}

class BrowserWindow extends El {
  css(){ return `:host{display:flex;flex-direction:column;width:3328px;height:1880px;border-radius:22px;background:#02040a;overflow:hidden;border:2px solid #37393c;border-top-color:#66696d;box-shadow:0 0 0 2px #000,0 10px 60px #0009}
   main{flex:1;min-height:0;overflow:hidden}.c{display:flex;flex-direction:column;width:3324px}step-indicator,recovery-card{flex:none}`; }
  html(){ return `<browser-toolbar></browser-toolbar><main><div class="c"><step-indicator></step-indicator><recovery-card></recovery-card><gh-footer></gh-footer></div></main>`; }
}

class DockApp extends El {
  css(){ return `:host{display:flex;flex-direction:column;align-items:center;width:78px;height:122px;padding-top:17px;position:relative;flex:none}
   .i{filter:drop-shadow(0 2px 2px #0006);display:flex;justify-content:center;height:78px}.dot{width:8px;height:8px;border-radius:50%;background:#a6bdeb;margin-top:17px}
   .badge{position:absolute;top:7px;left:52px;width:38px;height:38px;border-radius:50%;background:#df4f41;color:#fff;font-size:21px;line-height:38px;text-align:center;box-shadow:0 2px 5px #0005}`; }
  html(){ return `<div class="i"><ui-icon name="${a(this,'icon')}"></ui-icon></div>${this.hasAttribute('running')?'<div class="dot"></div>':''}${this.hasAttribute('badge')?`<div class="badge">${a(this,'badge')}</div>`:''}`; }
}

class MacDock extends El {
  css(){ return `:host{display:flex;width:1560px;height:127px;border:2px solid #40608f;border-left-color:#4d6088;border-radius:34px;background:linear-gradient(180deg,#1c2f55,#1b396c 45%,#1d3c74);padding-left:16px;gap:26px;box-shadow:0 0 0 1px #0006;box-sizing:border-box}
   hr{border:0;width:2px;height:94px;background:#5670a0;margin:14px 9px 0 9px;flex:none}`; }
  html(){ return `<dock-app icon="finder" running></dock-app><dock-app icon="launchpad"></dock-app><dock-app icon="safari" running></dock-app><dock-app icon="chrome"></dock-app><dock-app icon="vscode" running></dock-app><dock-app icon="whatsapp" running badge="31"></dock-app><dock-app icon="vmware"></dock-app><dock-app icon="iphone"></dock-app><dock-app icon="oleaf"></dock-app><hr>
   <dock-app icon="textedit"></dock-app><dock-app icon="discord" running></dock-app><dock-app icon="preview"></dock-app><hr style="margin-left:11px;margin-right:6px"><dock-app icon="docs" style="padding-top:21px"></dock-app><dock-app icon="trash" style="padding-top:8px;margin-left:1px"></dock-app>`; }
}

class MacDesktop extends El {
  css(){ return `:host{display:block;position:relative;width:3360px;height:2100px;overflow:hidden;background:#1b2340}
   mac-wallpaper,back-window,browser-window,mac-dock,.edge{position:absolute}
   mac-wallpaper{left:0;top:1950px}back-window{left:0;top:50px}browser-window{left:4px;top:80px}mac-dock{left:901px;top:1964px}.edge{left:0;top:120px;width:2px;height:96px;background:#9a9ca0}menu-bar{z-index:2}`; }
  html(){ return `<menu-bar></menu-bar><mac-wallpaper></mac-wallpaper><back-window></back-window><div class="edge"></div><browser-window></browser-window><mac-dock></mac-dock>`; }
}

const defs = {'mac-desktop':MacDesktop,'menu-bar':MenuBar,'mac-wallpaper':MacWallpaper,'back-window':BackWindow,'browser-window':BrowserWindow,'browser-toolbar':BrowserToolbar,'browser-tab':BrowserTab,'step-indicator':StepIndicator,'recovery-card':RecoveryCard,'info-alert':InfoAlert,'code-list':CodeList,'gh-button':GhButton,'gh-footer':GhFooter,'mac-dock':MacDock,'dock-app':DockApp,'ui-icon':UiIcon,'fit-text':FitText};
for(const [k,v] of Object.entries(defs)) customElements.define(k,v);
</script>
</body>
</html>
